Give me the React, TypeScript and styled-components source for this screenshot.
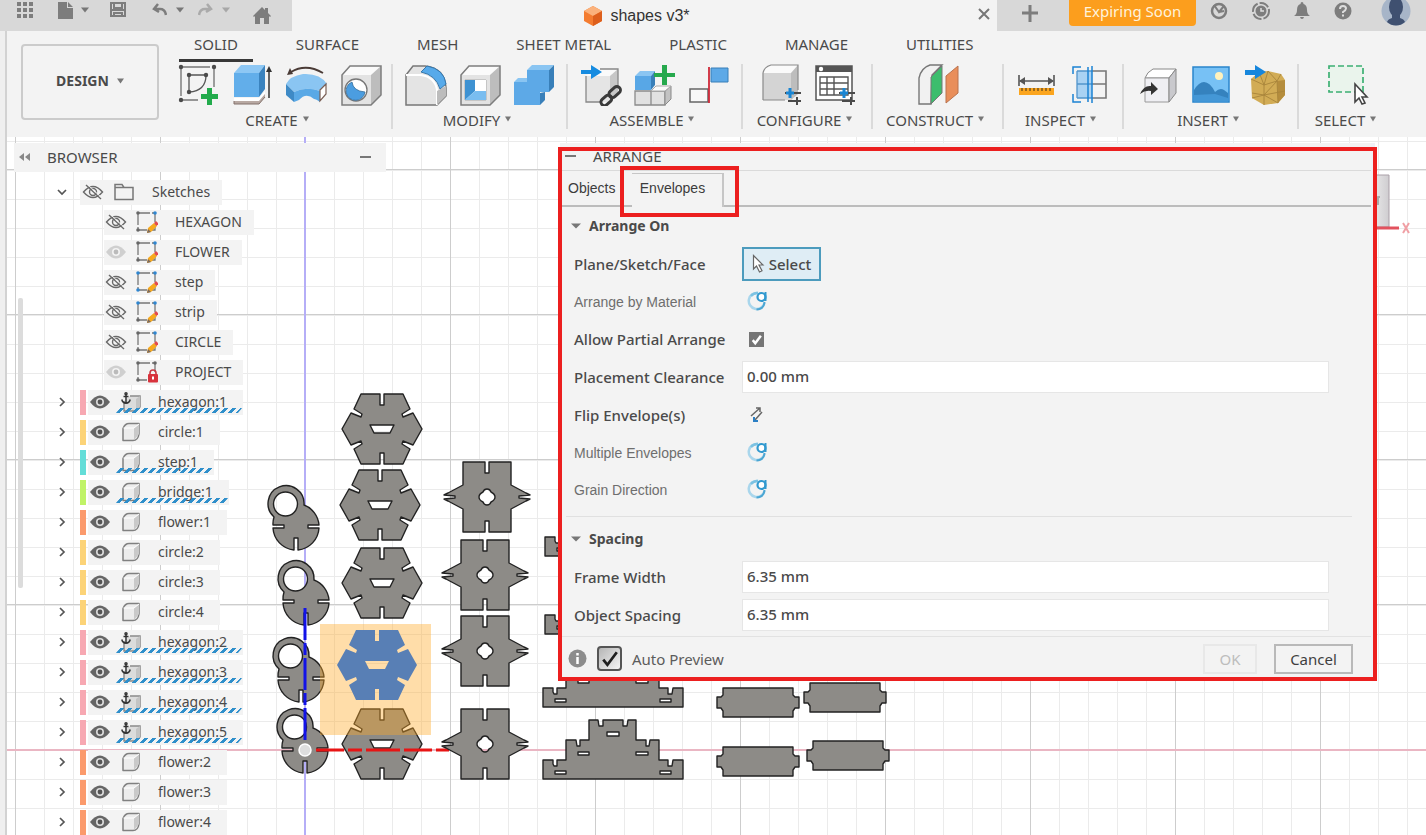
import React from 'react';
import styled, { createGlobalStyle, css } from 'styled-components';

const ui = '"Noto Sans", "Open Sans", sans-serif';
const arial = '"Liberation Sans", Arial, sans-serif';
const panel = '#f3f3f3';

const GlobalStyle = createGlobalStyle`
  *, *::before, *::after { box-sizing: border-box; }
  body { margin: 0; background: #fff; color: #4a4a4a; font-family: ${ui}; font-size: 15px; line-height: 20px; }
  button, input { font: inherit; color: inherit; }
  button { padding: 0; border: 0; background: none; }
  svg { display: block; flex: none; }
`;

const Window = styled.div`
  display: flex;
  flex-direction: column;
  height: 100vh;
  overflow: hidden;
`;

/* ---------- title bar ---------- */

const TitleBar = styled.header`
  display: flex;
  flex: none;
  height: 31px;
  background: #d8d8d8;
`;

const QuickBar = styled.div`
  display: flex;
  align-items: flex-start;
  width: 292px;
  padding: 2px 0 0 17px;
  color: #7d7d7d;
`;

const QuickButton = styled.button<{ $after: number; $faded?: boolean; $low?: boolean }>`
  margin-right: ${(p) => p.$after}px;
  padding-top: ${(p) => (p.$low ? 5 : 0)}px;
  opacity: ${(p) => (p.$faded ? 0.5 : 1)};
`;

const DocTab = styled.div`
  display: flex;
  flex: 1;
  align-items: center;
  padding: 0 6px 0 4px;
  background: ${panel};
`;

const DocTitle = styled.div`
  display: flex;
  flex: 1;
  align-items: center;
  justify-content: center;
  gap: 7px;
  color: #333;
  font: 16px/20px ${arial};
`;

const CloseButton = styled.button`
  margin-top: -4px;
  color: #777;
`;

const AccountBar = styled.div`
  display: flex;
  align-items: flex-start;
  width: 429px;
  padding: 2px 15px 0 24px;
  color: #7d7d7d;
`;

const TrialButton = styled.button`
  width: 127px;
  height: 26px;
  margin: -2px 14px 0 30px;
  padding-bottom: 4px;
  border-radius: 0 0 4px 4px;
  background: #fc9e1d;
  color: #fff3dc;
`;

const AccountIcons = styled.div`
  display: flex;
  flex: 1;
  gap: 24px;
`;

const Avatar = styled.button`
  width: 30px;
  height: 26px;
  margin-top: -2px;
`;

/* ---------- ribbon ---------- */

const Body = styled.div`
  display: flex;
  flex: 1;
  min-height: 0;
`;

const LeftEdge = styled.div`
  flex: none;
  width: 7px;
  border-right: 2px solid #d2d2d2;
  background: #efefef;
`;

const Main = styled.main`
  display: flex;
  flex: 1;
  flex-direction: column;
  min-width: 0;
`;

const Ribbon = styled.section`
  display: flex;
  flex: none;
  height: 106px;
  background: ${panel};
`;

const WorkspaceButton = styled.button`
  display: flex;
  flex: none;
  align-items: center;
  justify-content: center;
  gap: 8px;
  width: 138px;
  height: 76px;
  margin: 13px 9px 0 14px;
  padding-bottom: 2px;
  border: 2px solid #cbcbcb;
  border-radius: 4px;
  font-weight: 700;
  font-size: 14px;
`;

const RibbonMain = styled.div`
  flex: 1;
  min-width: 0;
`;

const RibbonTabs = styled.nav`
  display: flex;
  gap: 58px;
  height: 33px;
  padding: 3px 0 0 26px;
`;

const RibbonTab = styled.button<{ $active?: boolean }>`
  position: relative;
  height: 20px;
  white-space: nowrap;
  ${(p) =>
    p.$active &&
    css`
      &::after {
        content: '';
        position: absolute;
        top: 25px;
        left: -15px;
        right: -15px;
        height: 3px;
        background: #383838;
      }
    `}
`;

const Groups = styled.div`
  display: flex;
`;

const Group = styled.div<{ $width: number }>`
  display: flex;
  flex: none;
  flex-direction: column;
  align-items: center;
  width: ${(p) => p.$width}px;
  height: 65px;
  border-right: 2px solid #dadada;
  &:last-child { border-right: 0; }
`;

const Tools = styled.div`
  display: flex;
  gap: 12px;
`;

const GroupLabel = styled.button`
  display: flex;
  gap: 5px;
  height: 20px;
  margin: 4px 5px 0 0;
  svg { margin-top: 6px; }
`;

/* ---------- canvas ---------- */

const Canvas = styled.section`
  position: relative;
  flex: 1;
  min-height: 0;
  overflow: hidden;
  background: #fff;
`;

const Scene = styled.svg`
  position: absolute;
  inset: 0;
  width: 100%;
  height: 100%;
`;

const ViewCube = styled.svg`
  position: absolute;
  top: 36px;
  right: 12px;
`;

const Browser = styled.aside`
  position: relative;
  width: 379px;
  padding-top: 6px;
`;

const BrowserHeader = styled.header`
  display: flex;
  align-items: center;
  height: 29px;
  margin-left: 7px;
  padding: 0 14px 2px 5px;
  background: ${panel};
  h2 {
    flex: 1;
    margin: 0 0 0 17px;
    font-weight: 400;
    font-size: 15px;
  }
`;

const Thumb = styled.div`
  position: absolute;
  top: 161px;
  left: 11px;
  width: 5px;
  height: 290px;
  border-radius: 2px;
  background: #dcdcdc;
`;

const Tree = styled.ul`
  margin: 0;
  padding: 5px 0 0 47px;
  list-style: none;
`;

const Node = styled.li<{ $indent: number }>`
  display: flex;
  align-items: center;
  height: 30px;
  padding-left: ${(p) => p.$indent}px;
  font-size: 14px;
`;

const Swatch = styled.span<{ $color: string }>`
  width: 6px;
  height: 25px;
  margin: 0 2px 0 13px;
  background: ${(p) => p.$color};
`;

const Chip = styled.span<{ $pad: number; $end: number; $before?: number }>`
  position: relative;
  display: flex;
  align-items: center;
  height: 25px;
  margin-left: ${(p) => p.$before ?? 0}px;
  padding: 0 ${(p) => p.$end}px 0 ${(p) => p.$pad}px;
  background: ${panel};
`;

const NodeName = styled.span<{ $gap: number }>`
  margin-left: ${(p) => p.$gap}px;
  white-space: nowrap;
`;

const Hatch = styled.span`
  position: absolute;
  right: 3px;
  bottom: 2px;
  left: 30px;
  height: 5px;
  background: repeating-linear-gradient(90deg, #2f8fcb 0 4px, transparent 4px 8px);
  transform: skewX(-40deg);
`;

/* ---------- dialog ---------- */

const DialogArea = styled.div`
  position: absolute;
  top: 6px;
  right: 49px;
  left: 551px;
`;

const Dialog = styled.form`
  margin: 0 6px 0 2px;
  background: ${panel};
  box-shadow: 4px 0 0 #f0f0f6;
`;

const Marker = styled.div`
  position: absolute;
  inset: 4px 0 -1px 0;
  border: 4px solid #ec1f1f;
  pointer-events: none;
`;

const TabMarker = styled.div`
  position: absolute;
  top: 23px;
  left: 62px;
  width: 119px;
  height: 51px;
  border: 4px solid #ec1f1f;
  pointer-events: none;
`;

const DialogHeader = styled.header`
  display: flex;
  align-items: center;
  height: 28px;
  padding: 0 0 2px 5px;
  border-bottom: 1px solid #dadada;
  h2 {
    margin: 0 0 0 16px;
    font-weight: 400;
    font-size: 15px;
  }
`;

const Tabs = styled.div`
  display: flex;
  height: 36px;
  border-bottom: 2px solid #bcbcbc;
  font: 14px/20px ${arial};
`;

const Tab = styled.button<{ $active?: boolean }>`
  height: 35px;
  padding: 0 8px 2px;
  color: #3c3c3c;
  ${(p) =>
    p.$active &&
    css`
      width: 92px;
      height: 34px;
      margin: 2px 0 0 9px;
      padding: 0 10px 6px 0;
      border: solid #c6c6c6;
      border-width: 1px 2px 0 0;
      background: ${panel};
    `}
`;

const Section = styled.section`
  padding: 0 42px 2px 14px;
`;

const SectionHead = styled.h3`
  display: flex;
  align-items: center;
  gap: 8px;
  height: 38px;
  margin: 0 0 0 -3px;
  font-weight: 700;
  font-size: 14px;
`;

const Rule = styled.hr`
  height: 1px;
  margin: 6px 19px 3px 6px;
  border: 0;
  background: #e0e0e0;
`;

const Row = styled.div<{ $plain?: boolean }>`
  display: flex;
  align-items: center;
  height: ${(p) => (p.$plain ? 37 : 38)}px;
  font-weight: 500;
  label, > span {
    flex: none;
    width: 168px;
    ${(p) => p.$plain && css`color: #6e6e6e; font: 14px/20px ${arial};`}
  }
`;

const Field = styled.input`
  flex: 1;
  min-width: 0;
  height: 32px;
  padding: 0 4px 2px;
  border: 1px solid #e6e6e6;
  background: #fff;
`;

const SelectButton = styled.button`
  display: flex;
  align-items: center;
  justify-content: center;
  gap: 4px;
  width: 79px;
  height: 34px;
  padding-bottom: 1px;
  border: 2px solid #4c9bbd;
  background: #dfedf5;
`;

const IconButton = styled.button`
  margin-left: 5px;
`;

const Check = styled.span<{ $large?: boolean }>`
  position: relative;
  flex: none !important;
  width: ${(p) => (p.$large ? 25 : 15)}px !important;
  height: ${(p) => (p.$large ? 25 : 15)}px;
  margin-left: ${(p) => (p.$large ? 10 : 7)}px;
  input {
    display: block;
    width: 100%;
    height: 100%;
    margin: 0;
    appearance: none;
    ${(p) =>
      p.$large
        ? css`
            border: 2px solid #555;
            border-radius: 4px;
            background: linear-gradient(135deg, #b5b5b5, #f5f5f5);
          `
        : css`background: #757575;`}
  }
  svg {
    position: absolute;
    inset: 0;
    pointer-events: none;
  }
`;

const Footer = styled.footer`
  display: flex;
  align-items: center;
  height: 44px;
  padding: 0 18px 0 8px;
  border-top: 1px solid #e2e2e2;
  label {
    flex: 1;
    margin-left: 10px;
    color: #5c5c5c;
  }
`;

const FooterButton = styled.button<{ $off?: boolean }>`
  width: ${(p) => (p.$off ? 54 : 79)}px;
  height: 30px;
  margin-left: 17px;
  border: ${(p) => (p.$off ? '2px solid #e8e8e8' : '2px solid #b9b9b9')};
  color: ${(p) => (p.$off ? '#bdbdbd' : '#3f3f3f')};
`;

/* ---------- small icons ---------- */

const Caret = ({ size = 7, color = '#777' }: { size?: number; color?: string }) => (
  <svg width={size} height={6} viewBox="0 0 8 6" preserveAspectRatio="none"><path d="M0 0.5h8L4 5.5z" fill={color} /></svg>
);

const Dash = () => <svg width="12" height="4"><rect y="1" width="11" height="2" fill="#777" /></svg>;

const Eye = ({ faint }: { faint?: boolean }) => (
  <svg width="22" height="16" viewBox="0 0 22 16">
    <path d="M1 8Q11 -5 21 8Q11 21 1 8z" fill={faint ? '#cfcfcf' : '#666'} />
    <circle cx="11" cy="8" r="4" fill={faint ? '#f3f3f3' : '#ddd'} />
    <circle cx="11" cy="8" r="2.4" fill={faint ? '#bbb' : '#555'} />
  </svg>
);

const EyeOff = () => (
  <svg width="22" height="16" viewBox="0 0 22 16" fill="none" stroke="#6a6a6a" strokeWidth="1.4">
    <path d="M1.5 8Q11 -3 20.5 8Q11 19 1.5 8z" /><circle cx="11" cy="8" r="3.5" /><path d="M4 1l15 14" /><path d="M5.5 .5l15 14" stroke="#f3f3f3" strokeWidth="1" />
  </svg>
);

const Folder = () => (
  <svg width="20" height="18" viewBox="0 0 20 18" fill="none" stroke="#777" strokeWidth="1.5">
    <path d="M1 1.5h7l2 3h9v12H1zM1 4.5h9" />
  </svg>
);

const SketchIcon = ({ locked, blue = 1 }: { locked?: boolean; blue?: number }) => (
  <svg width="22" height="22" viewBox="0 0 22 22">
    <path d="M2 2H19V19H2z" fill="none" stroke="#777" strokeWidth="1.3" strokeDasharray="12 2" />
    {[[2, 2], [19, 2], [2, 19]].map(([x, y], i) => (
      <circle key={i} cx={x} cy={y} r="1.8" fill={!locked && (i === 1 || (i === 0 && blue > 1) || (i === 2 && blue > 2)) ? '#2f86d0' : '#666'} />
    ))}
    {locked ? (
      <><path d="M14 14v-2a3 3 0 0 1 6 0v2" fill="none" stroke="#c93a44" strokeWidth="1.6" /><rect x="12" y="13" width="10" height="8.5" rx="1" fill="#d8323c" /><rect x="16" y="15.5" width="2" height="3" fill="#fff" /></>
    ) : (
      <><path d="M12 17l6-5 3 3-6 6-4 1z" fill="#f7a91e" /><path d="M18 12l2-2 2.500 2.500-2 2.500z" fill="#e24a4f" /><path d="M12 18l3 3-4 1z" fill="#7a6a62" /></>
    )}
  </svg>
);

const BodyIcon = () => (
  <svg width="20" height="20" viewBox="0 0 20 20">
    <path d="M2 6.5Q4 1.500 8 1.500H18V12Q17 18.500 12 18.500H2z" fill="#ececec" stroke="#808080" strokeWidth="1.5" strokeLinejoin="round" />
    <path d="M13 6v12L18 12V2z" fill="#c9c9c9" /><path d="M2.500 6H13L18 2" fill="none" stroke="#fff" />
  </svg>
);

const AnchoredIcon = () => (
  <svg width="20" height="20" viewBox="0 0 20 20">
    <path d="M3 9V19H15L19 15V4H9" fill="#dcdcdc" stroke="#8a8a8a" strokeWidth="1.5" />
    <path d="M15 7v12L19 15V4z" fill="#c4c4c4" />
    <g fill="none" stroke="#333" strokeWidth="1.5"><circle cx="5" cy="1.8" r="1" /><path d="M5 3v8M2.500 4.500h5M.8 7.500Q1.500 11 5 11.200Q8.500 11 9.200 7.500" /></g>
  </svg>
);

const Chevron = ({ open }: { open?: boolean }) => (
  <svg width="10" height="10" viewBox="0 0 10 10" fill="none" stroke="#555" strokeWidth="1.7">
    <path d={open ? 'M1 3l4 4 4-4' : 'M3 1l4 4-4 4'} />
  </svg>
);

const ArrangeOption = () => (
  <svg width="21" height="21" viewBox="0 0 21 21" fill="none">
    <path d="M11 2A8 8 0 1 0 17.500 12" stroke="#a9d6ec" strokeWidth="2.5" />
    <path d="M11 2A8 8 0 0 0 4 5" stroke="#7cc2e2" strokeWidth="2.5" />
    <path d="M17.500 11Q17 18 9.500 18.500" stroke="#4ba6d3" strokeWidth="2" />
    <circle cx="14.500" cy="6" r="4" fill="#fff" stroke="#3199cf" strokeWidth="2.2" />
    <path d="M18.500 1v9" stroke="#3199cf" strokeWidth="2" />
  </svg>
);

/* ---------- ribbon drawings (42 x 42 each) ---------- */

const Cube = ({ side = '#bdbdbd', line = '#7d7d7d' }: { side?: string; line?: string }) => (
  <>
    <path d="M2 11L10 2H41L31 11z" fill="#fafafa" /><path d="M2 11H31V41H2z" fill="#e3e3e3" />
    <path d="M31 11L41 2V31L31 41z" fill={side} />
    <path d="M2 11L10 2H41V31L31 41H2z" fill="none" stroke={line} strokeWidth="1.5" />
  </>
);

const tools: Record<string, React.ReactNode> = {
  'Create Sketch': (
    <><path d="M3 3H36V23M3 3V36H20" fill="none" stroke="#777" strokeWidth="1.4" strokeDasharray="29 3" />
      <path d="M11 28V11H28Q28 27 11 28" fill="none" stroke="#555" strokeWidth="1.3" />
      {[[3, 3], [36, 3], [3, 36], [11, 11], [28, 11], [11, 28]].map(([x, y]) => <circle key={`${x}-${y}`} cx={x} cy={y} r="2.2" fill="#4a4a4a" />)}
      <path d="M29 24h5v6h6v5h-6v6h-5v-6h-6v-5h6z" fill="#22ab4c" /></>
  ),
  Extrude: (
    <><path d="M2 9L9 1H33L27 9z" fill="#8dc7f4" /><path d="M2 9H27V33H2z" fill="#62aeea" /><path d="M27 9L33 1V25L27 33z" fill="#3a83bf" />
      <path d="M2 34H27L33 27V30L27 37H2z" fill="#fff" /><path d="M2 37H27L33 30V33L27 40H2z" fill="#b8a9a3" /><path d="M2 37V40H27L33 33" fill="none" stroke="#84736d" />
      <path d="M37 34V6" stroke="#333" strokeWidth="1.5" /><path d="M34 8l3-6 3 6z" fill="#333" /></>
  ),
  Revolve: (
    <><path d="M5 8Q20-1 37 9" fill="none" stroke="#4a3b36" strokeWidth="1.8" /><path d="M1 11l3-7 3 6z" fill="#4a3b36" />
      <path d="M0 20Q4 12 17 10Q34 9 41 20L34 27Q20 22 8 28z" fill="#8ac5f2" /><path d="M0 20L8 28V38L0 31z" fill="#3e8ac6" /><path d="M8 28Q20 22 34 27V38Q30 35 28 35Q20 28 13 36L8 38z" fill="#5aa9e6" />
      <path d="M34 26L40 20V30L34 37z" fill="#fff" stroke="#795f55" strokeWidth="1.2" /></>
  ),
  Hole: (
    <><Cube /><circle cx="16" cy="26" r="11" fill="#fff" stroke="#777" strokeWidth="1.3" /><path d="M12 18A9.500 9.500 0 1 0 25 28Q13 27 12 18z" fill="#4b9de0" stroke="#346d9c" strokeWidth=".8" /></>
  ),
  Fillet: (
    <><path d="M1 11L8 2H20Q40 4 41 24V32L32 41H1z" fill="#e4e4e4" stroke="#777" strokeWidth="1.5" /><path d="M1 11H16Q30 13 32 26V41" fill="none" stroke="#fff" strokeWidth="2" />
      <path d="M32 27L41 22V32L32 41z" fill="#bcbcbc" /><path d="M16 8L22 2Q39 5 41 20L35 25Q31 11 16 8z" fill="#57aaea" stroke="#3677ab" /></>
  ),
  Shell: (
    <><Cube /><path d="M6 16H27V36H6z" fill="#fff" stroke="#aaa" /><path d="M6 16H16V27L6 36z" fill="#3e92d2" /><path d="M16 27H27V36H6z" fill="#79bdf0" /><path d="M16 16H27V27H16z" fill="#fff" /></>
  ),
  Combine: (
    <><path d="M14 6L19 1H41L36 6z" fill="#8ac5f2" /><path d="M14 6H36V28H27V41H1V18H14z" fill="#5da9e7" /><path d="M36 6L41 1V23L36 28zM27 29L32 28V36L27 41z" fill="#387fb9" /><path d="M1 18L5 14H14V18z" fill="#8ac5f2" /></>
  ),
  'Insert Component': (
    <><path d="M6 12L14 5H38L30 12z" fill="#fafafa" /><path d="M6 12H30V38H6z" fill="#e5e5e5" /><path d="M30 12L38 5V30L30 38z" fill="#c7c7c7" /><path d="M6 12V38H22M20 5H38V22" fill="none" stroke="#888" strokeWidth="1.3" />
      <path d="M1 6H11V1L22 8L11 15V10H1z" fill="#168be0" />
      <g fill="none" stroke="#3a3a3a" strokeWidth="3" strokeLinecap="round"><rect x="28" y="25" width="13" height="7" rx="3.5" transform="rotate(-42 34 28)" /><rect x="20" y="33" width="12" height="7" rx="3.5" transform="rotate(-42 26 36)" /></g></>
  ),
  'New Component': (
    <><path d="M1 27H17V41H1zM17 27H31V41H17z" fill="#e1e1e1" stroke="#8a8a8a" strokeWidth="1.3" /><path d="M31 27L37 22V35L31 41z" fill="#c2c2c2" stroke="#8a8a8a" /><path d="M17 27L22 22H37L31 27z" fill="#fafafa" stroke="#aaa" />
      <path d="M1 12L6 7H21L17 12z" fill="#8ac5f2" /><path d="M1 12H17V26H1z" fill="#58a7e6" /><path d="M17 12L21 7V21L17 26z" fill="#397fb8" />
      <path d="M28 1h5v8h8v4h-8v8h-5v-8h-8V9h8z" fill="#26a94d" /></>
  ),
  Joint: (
    <><path d="M2 25H20V38H2z" fill="#f8f8f8" stroke="#666" strokeWidth="1.5" /><path d="M23 4H40V18H23z" fill="#5da9e7" stroke="#397fb8" /><path d="M21 3V39" stroke="#cf2838" strokeWidth="1.8" /></>
  ),
  'Configure Model': (
    <><path d="M4 9Q5 3 12 1H39L32 9z" fill="#fafafa" /><path d="M4 9H32V36H4z" fill="#d4d4d4" /><path d="M32 9L39 1V30L32 36z" fill="#bdbdbd" /><path d="M4 36V9Q5 3 12 1H39V26M4 36H26" fill="none" stroke="#8a8a8a" strokeWidth="1.2" />
      <g stroke="#4a4a4a" strokeWidth="2"><path d="M26 29H42M29 37H42M38 33V41" /><path d="M31 24V34M27 29H35" stroke="#1985d3" strokeWidth="3" /></g></>
  ),
  'Configuration Table': (
    <><rect x="3" y="2" width="36" height="34" fill="#fff" stroke="#555" strokeWidth="1.5" /><path d="M3 2H39V8H3z" fill="#555" /><circle cx="8" cy="5" r="2.2" fill="#fff" />
      <path d="M7 13H35V31H7zM7 19H35M7 25H35M14 13V31M21 13V31" fill="none" stroke="#555" strokeWidth="1.4" />
      <g stroke="#4a4a4a" strokeWidth="2"><path d="M26 29H42M29 37H42M38 33V41" /><path d="M31 24V34M27 29H35" stroke="#1985d3" strokeWidth="3" /></g></>
  ),
  'Offset Plane': (
    <><path d="M2 14Q4 4 13 1H25L15 11L14 40H2z" fill="#f1f1f1" stroke="#777" strokeWidth="1.4" /><path d="M14 13L25 2V29L14 40z" fill="#3cbd6d" stroke="#777" /><path d="M29 12L41 2V29L29 39z" fill="#e98e5a" stroke="#b9734e" /></>
  ),
  Measure: (
    <><path d="M4 11V22M39 11V22M5 17H38" fill="none" stroke="#555" strokeWidth="1.6" /><path d="M4 17l6-4v8zM39 17l-6-4v8z" fill="#555" />
      <rect x="4" y="24" width="35" height="7" fill="#fba51e" /><path d="M7 24v3M11 24v3M15 24v3M19 24v3M23 24v3M27 24v3M31 24v3M35 24v3" stroke="#5b431d" strokeWidth="1.2" /></>
  ),
  'Section Analysis': (
    <><rect x="8" y="7" width="15" height="27" fill="#a9d2f3" /><path d="M23 7H37V34H23M23 20H37" fill="none" stroke="#777" strokeWidth="1.6" /><path d="M8 20H23M8 7H23M8 34H23M8 7V34" stroke="#5295cc" strokeWidth="1.3" />
      <path d="M4 10V3H12M4 30V38H12M23 2V39M19 3V38" fill="none" stroke="#1b83d4" strokeWidth="1.5" /></>
  ),
  'Insert Derive': (
    <><path d="M9 14Q11 8 17 5H40L33 14z" fill="#fff" stroke="#888" /><path d="M9 14H33V38H9z" fill="#efeff3" stroke="#999" /><path d="M33 14L40 5V29L33 38z" fill="#c9c9cd" stroke="#888" /><path d="M4 30Q8 21 15 22V18L22 25L15 31V27Q9 26 4 30z" fill="#333" /></>
  ),
  Canvas: (
    <><rect x="3" y="3" width="36" height="35" fill="#77c1f5" stroke="#2a85cc" strokeWidth="1.5" /><circle cx="29" cy="12" r="4" fill="#fff2bd" /><path d="M4 26Q9 18 14 18Q20 18 25 28Q30 23 34 26L38 29V37H4z" fill="#3582be" /><path d="M4 31L25 30L38 34V37H4z" fill="#4497d6" /></>
  ),
  'Insert Mesh': (
    <><path d="M7 15L15 8L24 7L37 10L41 16V31L34 39L20 41L8 34z" fill="#d2ac55" /><path d="M33 17L41 16V31L34 39z" fill="#b58d3d" /><path d="M7 15L20 21L33 17L37 10M20 21V41M33 17L34 39M8 29L20 31L41 27M15 8L20 21L24 7L33 17M20 31L33 17M8 34L20 31L34 39" fill="none" stroke="#a8853b" strokeWidth=".9" /><path d="M1 6H11V1L22 8L11 15V11H1z" fill="#1686dc" /></>
  ),
  Select: (
    <><rect x="2" y="2" width="34" height="26" fill="#eaf4ec" stroke="#3caf73" strokeWidth="1.7" strokeDasharray="6 3" /><path d="M28 20V38L32 34L35 40L38 39L35 33H40z" fill="#fff" stroke="#444" strokeWidth="1.6" /></>
  ),
};

const groups = [
  { label: 'CREATE', width: 225, tools: ['Create Sketch', 'Extrude', 'Revolve', 'Hole'] },
  { label: 'MODIFY', width: 175, tools: ['Fillet', 'Shell', 'Combine'] },
  { label: 'ASSEMBLE', width: 175, tools: ['Insert Component', 'New Component', 'Joint'] },
  { label: 'CONFIGURE', width: 130, tools: ['Configure Model', 'Configuration Table'] },
  { label: 'CONSTRUCT', width: 131, tools: ['Offset Plane'] },
  { label: 'INSPECT', width: 120, tools: ['Measure', 'Section Analysis'] },
  { label: 'INSERT', width: 175, tools: ['Insert Derive', 'Canvas', 'Insert Mesh'] },
  { label: 'SELECT', width: 98, tools: ['Select'] },
];

const ribbonTabs = ['SOLID', 'SURFACE', 'MESH', 'SHEET METAL', 'PLASTIC', 'MANAGE', 'UTILITIES'];

/* ---------- tree data ---------- */

const sketches = [
  { name: 'HEXAGON' },
  { name: 'FLOWER', shown: true },
  { name: 'step', blue: 3 },
  { name: 'strip', blue: 2 },
  { name: 'CIRCLE' },
  { name: 'PROJECT', shown: true, locked: true },
];

const pink = '#f7a8b2';
const yellow = '#fcd377';
const orange = '#fb9a6c';

const components = [
  { name: 'hexagon:1', color: pink, anchored: true, hatched: true },
  { name: 'circle:1', color: yellow },
  { name: 'step:1', color: '#63ddd8', hatched: true },
  { name: 'bridge:1', color: '#c0f367', hatched: true },
  { name: 'flower:1', color: orange },
  { name: 'circle:2', color: yellow },
  { name: 'circle:3', color: yellow },
  { name: 'circle:4', color: yellow },
  { name: 'hexagon:2', color: pink, anchored: true, hatched: true },
  { name: 'hexagon:3', color: pink, anchored: true, hatched: true },
  { name: 'hexagon:4', color: pink, anchored: true, hatched: true },
  { name: 'hexagon:5', color: pink, anchored: true, hatched: true },
  { name: 'flower:2', color: orange },
  { name: 'flower:3', color: orange },
  { name: 'flower:4', color: orange },
];

/* ---------- part outlines, each around its own centre ---------- */

const shapes = {
  hexagon:
    'M-21-35H-2V-24H2V-35H21L28-20L20-15L21-12L31-16L40 0L31 16L21 12L20 15L28 20L21 35H2V24H-2V35H-21L-28 20L-20 15L-21 12L-31 16L-40 0L-31-16L-21-12L-20-15L-28-20zM-12-4H12L8 4H-8z',
  ring:
    'M-22-10A18 18 0 1 1 8-22A23.400 23.400 0 0 1 23-2H12V1H23A23.400 23.400 0 0 1 2 23V11H-2V23A23.400 23.400 0 0 1-23 1H-12V-2H-23A23.400 23.400 0 0 1-22-10zM-22.500-23a12 12 0 1 0 24 0a12 12 0 1 0-24 0z',
  flower:
    'M-24-35H-2V-24H2V-35H24V-12L39-4L43-2L32-1V1L43 2L39 4L24 12V35H2V24H-2V35H-24V12L-39 4L-43 2L-32 1V-1L-43-2L-39-4L-24-12zM-4-5Q-3-8 0-8Q3-8 4-5Q8-3 8 0Q8 3 4 5Q3 8 0 8Q-3 8-4 5Q-8 3-8 0Q-8-3-4-5z',
  step:
    'M-70 0V-19H-60V-15L-59-13H-56V-19H-47V-39H-37L-36-33H-33V-39H-24V-59H-15L-14-53H-10V-59H10V-53H14L15-59H23V-39H33V-33H36L37-39H46V-19H55V-13H59L60-19H70V0zM-58-8V-5H-47V-8zM58-8V-5H47V-8zM-35-27V-24H-24V-27zM35-27V-24H23V-27zM-6-47V-43H6V-47z',
  strip:
    'M-35-15H35V-8L37-6H41V5H37L35 8V14H-35V8L-37 5H-41V-6H-37L-35-8z',
};

const parts: [keyof typeof shapes, number, number][] = [
  ['ring', -9, -223], ['ring', 1, -148], ['ring', -4, -71], ['ring', 0, 0],
  ['hexagon', 77, -321], ['hexagon', 75, -245], ['hexagon', 77, -167], ['hexagon', 77, -6],
  ['step', 310, -194], ['step', 310, -116], ['step', 308, -43], ['step', 308, 29],
  ['strip', 453, -47], ['strip', 453, 12], ['strip', 540, -52], ['strip', 543, 6],
];

const flowers = [[182, -253], [180, -175], [180, -99], [180, -6]];

const partStyle = { fill: '#8d8b87', stroke: '#222', strokeWidth: 1.4, fillRule: 'evenodd' as const, strokeLinejoin: 'round' as const };

const SceneDrawing = () => (
  <Scene aria-label="Model canvas">
    <defs>
      <pattern id="minor" x="298" y="613" width="29" height="29" patternUnits="userSpaceOnUse">
        <path d="M.5 0V29M0 .5H29" stroke="#ebebeb" strokeWidth="1" />
      </pattern>
      <pattern id="major" x="298" y="612" width="145" height="145" patternUnits="userSpaceOnUse">
        <path d="M.5 0V145M0 .5H145" stroke="#cdcdcd" strokeWidth="1" />
      </pattern>
    </defs>
    <rect width="100%" height="100%" fill="url(#minor)" />
    <rect width="100%" height="100%" fill="url(#major)" />
    <rect x="297" width="2" height="100%" fill="#b5aef7" />
    <rect y="612" width="100%" height="2" fill="#eab6c3" />
    <g transform="translate(298 613)">
      {parts.map(([kind, x, y], i) => (
        <path key={i} d={shapes[kind]} transform={`translate(${x} ${y})`} {...partStyle} />
      ))}
      <rect x="15" y="-126" width="111" height="111" fill="#ffaa28" fillOpacity="0.4" />
      <path d={shapes.hexagon} transform="translate(72 -85)" fill="#587fb5" fillRule="evenodd" />
      <path d="M0-142V-8" stroke="#1212e8" strokeWidth="3" strokeDasharray="32 3 12 3" />
      <path d="M11 0H144" stroke="#e81414" strokeWidth="3" strokeDasharray="28 4 14 4 34 4" />
      {flowers.map(([x, y]) => (
        <path key={y} d={shapes.flower} transform={`translate(${x} ${y})`} {...partStyle} />
      ))}
      <circle r="6" fill="#dedede" stroke="#fff" strokeWidth="1.5" />
    </g>
  </Scene>
);

const ViewCubeDrawing = () => (
  <ViewCube width="46" height="64" viewBox="0 0 46 64">
    <defs><linearGradient id="cube"><stop offset="0" stopColor="#f2f2f2" /><stop offset="1" stopColor="#cfcdd0" /></linearGradient></defs>
    <path d="M0 2H21V54H0z" fill="url(#cube)" stroke="#aaa0a8" />
    <path d="M4 30L10 24L12 24M10 24V32" fill="none" stroke="#aaa" strokeWidth="2" />
    <path d="M4 55H31" stroke="#e2525e" strokeWidth="3" />
    <path d="M35 50l6 10M41 50l-6 10" stroke="#f0a0a5" strokeWidth="2" />
  </ViewCube>
);

const Tick = ({ size, color, width }: { size: number; color: string; width: number }) => (
  <svg width={size} height={size} viewBox="0 0 24 24" fill="none" stroke={color} strokeWidth={width}><path d="M6 13l4 5L19 6" /></svg>
);

export default function App() {
  return (
    <Window>
      <GlobalStyle />
      <TitleBar>
        <QuickBar>
          <QuickButton $after={25} aria-label="Data panel">
            <svg width="16" height="17" fill="currentColor">{[0, 6, 12].map((x) => [0, 6, 12].map((y) => <rect key={`${x}${y}`} x={x} y={y} width="4" height="4" />))}</svg>
          </QuickButton>
          <QuickButton $after={8} aria-label="File">
            <svg width="15" height="17" fill="currentColor"><path d="M0 0h9v6h6v11H0zM10 0l5 5h-5z" /></svg>
          </QuickButton>
          <QuickButton $after={21} $low aria-label="File menu"><Caret size={8} /></QuickButton>
          <QuickButton $after={26} aria-label="Save">
            <svg width="16" height="16" fill="none" stroke="currentColor" strokeWidth="2"><path d="M1 1h14v13H1zM4 1v5h8V1M1 8h14M4 14v-3h8v3" /></svg>
          </QuickButton>
          <QuickButton $after={9} aria-label="Undo">
            <svg width="15" height="15" fill="none" stroke="currentColor" strokeWidth="2.5"><path d="M6 2L2 7l5 3M2 7h6q5 0 6 6" /></svg>
          </QuickButton>
          <QuickButton $after={14} $low aria-label="Undo history"><Caret size={8} /></QuickButton>
          <QuickButton $after={9} $faded aria-label="Redo">
            <svg width="15" height="15" fill="none" stroke="currentColor" strokeWidth="2.5"><path d="M9 2l4 5-5 3M13 7H7q-5 0-6 6" /></svg>
          </QuickButton>
          <QuickButton $after={23} $low $faded aria-label="Redo history"><Caret size={8} /></QuickButton>
          <QuickButton $after={0} $low aria-label="Home">
            <svg width="18" height="17" fill="currentColor"><path d="M9 0l3 3V1h3v5l3 3-1 1-1-1v8h-5v-6H7v6H2V9l-1 1-1-1z" /></svg>
          </QuickButton>
        </QuickBar>
        <DocTab>
          <DocTitle>
            <svg width="20" height="20" viewBox="0 0 20 20"><path d="M10 0l9 5v10l-9 5-9-5V5z" fill="#f47c30" /><path d="M10 0l9 5-9 5-9-5z" fill="#fbb27c" /><path d="M10 10l9-5v10l-9 5z" fill="#dd5f1c" /></svg>
            shapes v3*
          </DocTitle>
          <CloseButton aria-label="Close tab"><svg width="14" height="12" fill="none" stroke="currentColor" strokeWidth="2"><path d="M2 1l10 10M12 1L2 11" /></svg></CloseButton>
        </DocTab>
        <AccountBar>
          <button aria-label="New tab"><svg width="18" height="22" stroke="currentColor" strokeWidth="3"><path d="M9 3v17M1 11h16" /></svg></button>
          <TrialButton>Expiring Soon</TrialButton>
          <AccountIcons>
            <button aria-label="Extensions"><svg width="18" height="18" fill="none" stroke="currentColor" strokeWidth="2.5"><circle cx="9" cy="9" r="7" /><path d="M4 3l5 7 5-6M9 10l5-1" strokeWidth="2" /></svg></button>
            <button aria-label="Job status"><svg width="18" height="18" fill="none" stroke="currentColor" strokeWidth="2"><circle cx="9" cy="9" r="8" strokeDasharray="10 2" /><circle cx="9" cy="9" r="4.5" fill="currentColor" /><path d="M9 6v3h3" stroke="#ddd" strokeWidth="1.5" /></svg></button>
            <button aria-label="Notifications"><svg width="16" height="18" fill="currentColor"><path d="M8 0q1.500 0 1.500 2Q13 3 13 8q0 4 3 6H0q3-2 3-6 0-5 3.500-6Q6.500 0 8 0zM6 15h4q-.500 2-2 2t-2-2z" /></svg></button>
            <button aria-label="Help"><svg width="18" height="18" viewBox="0 0 18 18"><circle cx="9" cy="9" r="8.5" fill="currentColor" /><path d="M6 7q0-3 3-3t3 2.500q0 1.500-3 3.500v1M9 12.500v2" fill="none" stroke="#ddd" strokeWidth="2" /></svg></button>
          </AccountIcons>
          <Avatar aria-label="Account">
            <svg width="30" height="26" viewBox="0 0 30 26"><circle cx="15" cy="11" r="14.5" fill="#a7b5c8" /><ellipse cx="15" cy="7" rx="7" ry="10" fill="#3f5070" /><path d="M11 14h8v4q4 1 5 4-4 3.500-9 3.500T6 22q1-3 5-4z" fill="#3f5070" /></svg>
          </Avatar>
        </AccountBar>
      </TitleBar>

      <Body>
        <LeftEdge />
        <Main>
          <Ribbon>
            <WorkspaceButton>DESIGN <Caret /></WorkspaceButton>
            <RibbonMain>
              <RibbonTabs>
                {ribbonTabs.map((t, i) => <RibbonTab key={t} $active={i === 0}>{t}</RibbonTab>)}
              </RibbonTabs>
              <Groups>
                {groups.map((g) => (
                  <Group key={g.label} $width={g.width}>
                    <Tools>
                      {g.tools.map((t) => (
                        <button key={t} aria-label={t}><svg width="42" height="42" viewBox="0 0 42 42">{tools[t]}</svg></button>
                      ))}
                    </Tools>
                    <GroupLabel>{g.label} <Caret size={6} /></GroupLabel>
                  </Group>
                ))}
              </Groups>
            </RibbonMain>
          </Ribbon>

          <Canvas>
            <SceneDrawing />
            <ViewCubeDrawing />
            <Browser>
              <BrowserHeader>
                <svg width="11" height="8" fill="#888"><path d="M5 0v8L0 4zM11 0v8L6 4z" /></svg>
                <h2>BROWSER</h2>
                <Dash />
              </BrowserHeader>
              <Thumb />
              <Tree>
                <Node $indent={3}>
                  <Chevron open />
                  <Chip $before={13} $pad={2} $end={12}>
                    <EyeOff /><NodeName $gap={10}><Folder /></NodeName><NodeName $gap={18}>Sketches</NodeName>
                  </Chip>
                </Node>
                {sketches.map((s) => (
                  <Node key={s.name} $indent={50}>
                    <Chip $pad={1} $end={12}>
                      {s.shown ? <Eye faint /> : <EyeOff />}
                      <NodeName $gap={9}><SketchIcon locked={s.locked} blue={s.blue} /></NodeName>
                      <NodeName $gap={17}>{s.name}</NodeName>
                    </Chip>
                  </Node>
                ))}
                {components.map((c) => (
                  <Node key={c.name} $indent={3}>
                    <Chevron />
                    <Swatch $color={c.color} />
                    <Chip $pad={1} $end={16}>
                      <Eye />
                      <NodeName $gap={10}>{c.anchored ? <AnchoredIcon /> : <BodyIcon />}</NodeName>
                      <NodeName $gap={17}>{c.name}</NodeName>
                      {c.hatched && <Hatch />}
                    </Chip>
                  </Node>
                ))}
              </Tree>
            </Browser>

            <DialogArea>
              <Dialog onSubmit={(e) => e.preventDefault()}>
                <DialogHeader><Dash /><h2>ARRANGE</h2></DialogHeader>
                <Tabs>
                  <Tab type="button">Objects</Tab>
                  <Tab type="button" $active>Envelopes</Tab>
                </Tabs>
                <Section>
                  <SectionHead><Caret size={10} />Arrange On</SectionHead>
                  <Row>
                    <span>Plane/Sketch/Face</span>
                    <SelectButton type="button">
                      <svg width="13" height="19" viewBox="0 0 13 19"><path d="M1.500 1.500V15l3-3 3 6 2.500-1.200-3-5.800h4z" fill="#fff" stroke="#666" strokeWidth="1.2" /></svg>
                      Select
                    </SelectButton>
                  </Row>
                  <Row $plain><span>Arrange by Material</span><IconButton type="button" aria-label="Arrange by Material"><ArrangeOption /></IconButton></Row>
                  <Row>
                    <label htmlFor="partial">Allow Partial Arrange</label>
                    <Check><input id="partial" type="checkbox" defaultChecked /><Tick size={15} color="#fff" width={4} /></Check>
                  </Row>
                  <Row><label htmlFor="clearance">Placement Clearance</label><Field id="clearance" defaultValue="0.00 mm" /></Row>
                  <Row>
                    <span>Flip Envelope(s)</span>
                    <IconButton type="button" aria-label="Flip Envelope(s)">
                      <svg width="20" height="20" viewBox="0 0 20 20" fill="none" stroke="#666" strokeWidth="1.5"><path d="M4 11L13 3M9 3h4v4M15 7l-7 8" /><path d="M7 12v4h4" stroke="#2b7fc4" strokeWidth="2" /></svg>
                    </IconButton>
                  </Row>
                  <Row $plain><span>Multiple Envelopes</span><IconButton type="button" aria-label="Multiple Envelopes"><ArrangeOption /></IconButton></Row>
                  <Row $plain><span>Grain Direction</span><IconButton type="button" aria-label="Grain Direction"><ArrangeOption /></IconButton></Row>
                </Section>
                <Rule />
                <Section>
                  <SectionHead><Caret size={10} />Spacing</SectionHead>
                  <Row><label htmlFor="frame">Frame Width</label><Field id="frame" defaultValue="6.35 mm" /></Row>
                  <Row><label htmlFor="spacing">Object Spacing</label><Field id="spacing" defaultValue="6.35 mm" /></Row>
                </Section>
                <Footer>
                  <svg width="19" height="19" viewBox="0 0 19 19"><circle cx="9.5" cy="9.5" r="9" fill="#8c8c8c" /><path d="M9.500 4v2.500M9.500 8v7" stroke="#fff" strokeWidth="2.5" /></svg>
                  <Check $large><input id="preview" type="checkbox" defaultChecked /><Tick size={25} color="#1e1e1e" width={2.6} /></Check>
                  <label htmlFor="preview">Auto Preview</label>
                  <FooterButton type="button" $off disabled>OK</FooterButton>
                  <FooterButton type="button">Cancel</FooterButton>
                </Footer>
              </Dialog>
              <Marker />
              <TabMarker />
            </DialogArea>
          </Canvas>
        </Main>
      </Body>
    </Window>
  );
}
